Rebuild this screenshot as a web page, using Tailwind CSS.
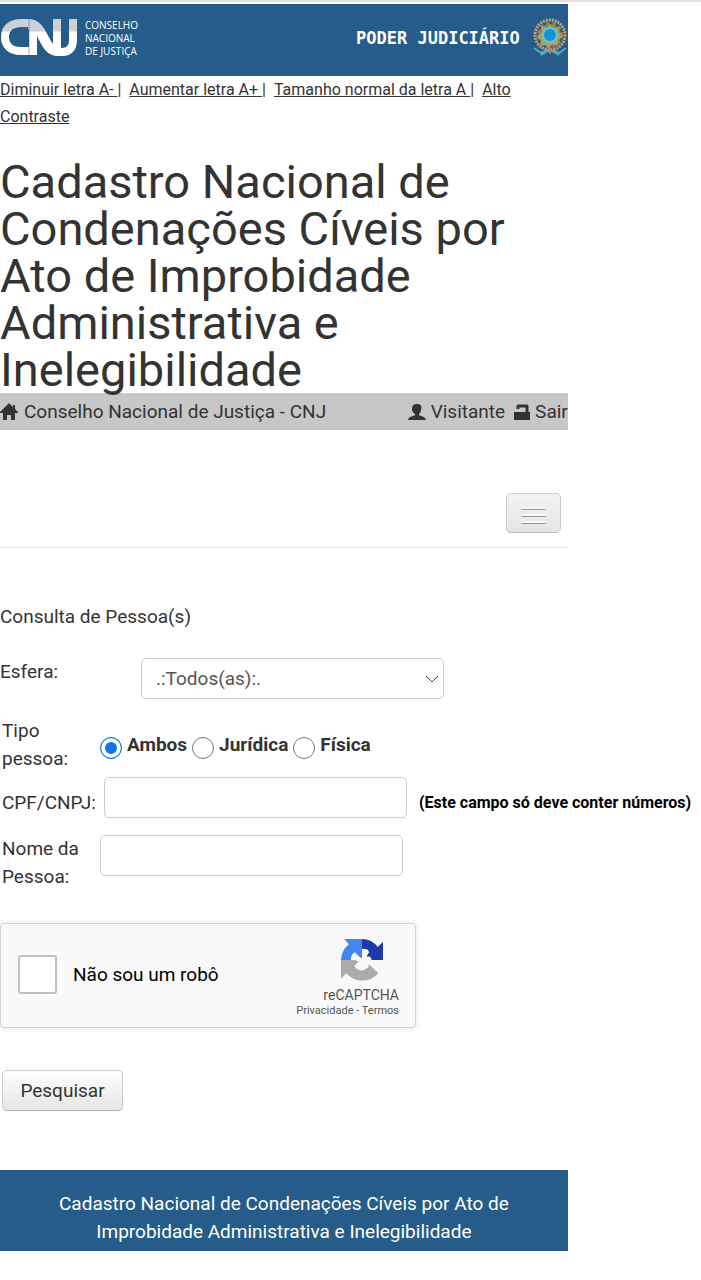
<!DOCTYPE html>
<html lang="pt-BR">

<head>
    <meta charset="UTF-8">
    <meta name="viewport" content="width=device-width, initial-scale=1.0">
    <script src="https://cdn.jsdelivr.net/npm/@tailwindcss/browser@4"></script>
    <title>Cadastro Nacional de Condenações Cíveis</title>
</head>

<body class="bg-white border-t-2 border-[#e0e0e0] pt-0.5 font-['Roboto',sans-serif] text-[19px] leading-7 text-[#333]">
    <div class="w-[81%]">
        <header class="flex items-center justify-between h-[72px] pb-1 bg-[#265c89] text-white">
            <div class="flex items-center gap-2">
                <svg class="w-[77px] h-10" viewBox="0 0 77 40" fill="none" stroke-width="8">
                    <defs>
                        <linearGradient id="cnj" gradientUnits="userSpaceOnUse" x1="0" y1="0" x2="0" y2="40">
                            <stop offset="0" stop-color="#ccd2da" />
                            <stop offset=".32" stop-color="#ccd2da" />
                            <stop offset=".36" stop-color="#fff" />
                            <stop offset="1" stop-color="#fff" />
                        </linearGradient>
                    </defs>
                    <path stroke="url(#cnj)" d="M30 5H22C10 5 5 11 5 19s5 14 16 14h12V10" />
                    <path stroke="url(#cnj)" stroke-width="10" d="M28 6c17 0 14 27 30 27" />
                    <path stroke="url(#cnj)" d="M57 37V1M56 34h6c8 0 11-5 11-12V1" />
                    <path stroke="#265c89" stroke-width="1" stroke-opacity=".5" d="M29 1v36" />
                </svg>
                <p class="font-['Open_Sans',sans-serif] font-medium text-[10px] leading-[13px]">CONSELHO<br>NACIONAL<br>DE JUSTIÇA</p>
            </div>
            <div class="flex items-center gap-3">
                <span class="font-['DejaVu_Sans_Mono',monospace] font-bold text-[17px]">PODER JUDICIÁRIO</span>
                <svg class="w-9 h-10" viewBox="0 0 36 40" fill="none">
                    <path d="M2 30l7 5 9-4 9 4 7-5M9 37l9-5 9 5" stroke="#4caac5" stroke-width="2" />
                    <circle cx="18" cy="17" r="15" stroke="#c5a070" stroke-width="3" stroke-dasharray="2 1" />
                    <circle cx="18" cy="17" r="11" fill="#6c9563" stroke="#b9774c" stroke-width="4" stroke-dasharray="3 3" />
                    <path d="M18 6l3 5 6-2-1 6 5 3-5 4v6l-6-2-3 5-3-4-6 1 1-6-4-4 5-4-1-6 6 2z" fill="#a5a568" />
                    <circle cx="18" cy="17" r="7" fill="#1691d3" stroke="#62c5e4" stroke-width="2" />
                    <path d="M18 28v8" stroke="#c8714c" stroke-width="2" />
                </svg>
            </div>
        </header>

        <nav class="text-[16px] leading-[27px]">
            <a href="#" class="underline">Diminuir letra A-&nbsp;</a>|
            <a href="#" class="ml-1 underline">Aumentar letra A+&nbsp;</a>|
            <a href="#" class="ml-1 underline">Tamanho normal da letra A&nbsp;</a>|
            <a href="#" class="ml-1 underline">Alto Contraste</a>
        </nav>

        <h1 class="pt-7 pr-12 text-[47px] leading-[47px]">Cadastro Nacional de Condenações Cíveis por Ato de Improbidade Administrativa e Inelegibilidade</h1>

        <div class="flex items-center justify-between h-[37px] bg-[#c7c7c7]">
            <a href="#" class="flex items-center gap-1">
                <svg class="w-5 h-5" viewBox="0 0 20 20" fill="#333"><path d="M9 1L0 10v1h3v7h4v-5h4v5h4v-7h3v-1l-3-3V3h-2v2z" /></svg>
                Conselho Nacional de Justiça - CNJ
            </a>
            <div class="flex items-center gap-2">
                <a href="#" class="flex items-center gap-1">
                    <svg class="w-5 h-5" viewBox="0 0 20 20" fill="#333"><path d="M10 2c4 0 5 2 4 6 0 2-1 3-2 4v1c3 2 6 1 7 5H1c1-4 4-3 7-5v-1C6 11 6 10 5 8 5 4 6 2 10 2z" /></svg>
                    Visitante
                </a>
                <a href="#" class="flex items-center gap-1">
                    <svg class="w-[18px] h-5" viewBox="0 0 18 20" fill="none"><path d="M1 10h16v8H1z" fill="#333" /><path d="M5 7V4h9v7" stroke="#333" stroke-width="3" stroke-linejoin="round" /></svg>
                    Sair
                </a>
            </div>
        </div>

        <div class="flex justify-end pt-[63px] pr-[7px] pb-3.5 border-b border-[#e5e5e5]">
            <button type="button" aria-label="Menu" class="flex flex-col items-center justify-center gap-1 w-[55px] h-10 pt-1 rounded-[5px] border border-[#ccc] border-b-[#b8b8b8] bg-linear-to-b from-[#f4f4f4] to-[#e5e5e5]">
                <span class="w-[25px] h-[3px] rounded-sm bg-[#f5f5f5] border-b border-[#999]"></span>
                <span class="w-[25px] h-[3px] rounded-sm bg-[#f5f5f5] border-b border-[#999]"></span>
                <span class="w-[25px] h-[3px] rounded-sm bg-[#f5f5f5] border-b border-[#999]"></span>
            </button>
        </div>
    </div>

    <form class="pt-[55px]">
        <h2>Consulta de Pessoa(s)</h2>

        <div class="flex items-start pt-[27px]">
            <label for="esfera" class="w-[141px]">Esfera:</label>
            <div class="relative">
                <select id="esfera" class="appearance-none w-[303px] h-[41px] px-3.5 rounded-[5px] border border-[#ccc] bg-white text-[#555]">
                    <option>.:Todos(as):.</option>
                </select>
                <svg class="absolute right-1 top-3 w-4 h-4 pointer-events-none" viewBox="0 0 16 16" fill="none" stroke="#444"><path d="M2 6l6 6 6-6" /></svg>
            </div>
        </div>

        <div role="radiogroup" aria-labelledby="tipo" class="flex items-start pt-[18px]">
            <span id="tipo" class="w-[100px] pl-0.5 pr-5">Tipo pessoa:</span>
            <div class="flex gap-[5px] pt-3.5 font-bold">
                <label class="flex gap-[5px]"><input type="radio" name="tipo" checked class="appearance-none mt-1.5 size-[22px] rounded-full border border-[#777] bg-white checked:border-[#0b74ee] checked:bg-[#0b74ee] checked:shadow-[inset_0_0_0_4px_white]">Ambos</label>
                <label class="flex gap-[5px]"><input type="radio" name="tipo" class="appearance-none mt-1.5 size-[22px] rounded-full border border-[#777] bg-white">Jurídica</label>
                <label class="flex gap-[5px]"><input type="radio" name="tipo" class="appearance-none mt-1.5 size-[22px] rounded-full border border-[#777] bg-white">Física</label>
            </div>
        </div>

        <div class="flex items-start pt-1 pl-0.5">
            <label for="cpf" class="w-[102px] shrink-0 pt-3">CPF/CNPJ:</label>
            <input id="cpf" type="text" class="w-[303px] h-[41px] shrink-0 px-3 rounded-[5px] border border-[#ccc] bg-white">
            <b class="pt-3 pl-3 text-[16px] text-black whitespace-nowrap">(Este campo só deve conter números)</b>
        </div>

        <div class="flex items-start pt-[17px] pl-0.5">
            <label for="nome" class="w-[98px] shrink-0">Nome da Pessoa:</label>
            <input id="nome" type="text" class="w-[303px] h-[41px] px-3 rounded-[5px] border border-[#ccc] bg-white">
        </div>

        <div class="flex items-center justify-between w-[416px] h-[105px] mt-8 pl-[17px] pr-4 rounded-[4px] border border-[#d3d3d3] bg-[#f9f9f9] shadow-[0_0_4px_1px_rgba(0,0,0,0.08)]">
            <label class="flex items-center gap-4 pb-0.5 text-black"><input type="checkbox" class="appearance-none size-[39px] rounded-[3px] border-2 border-[#c1c1c1] bg-white">Não sou um robô</label>
            <div class="flex flex-col items-end pt-1 text-[#555]">
                <svg class="w-[42px] h-[42px] mr-4 mb-1" viewBox="0 0 64 64">
                    <path d="M64 32V4l-8 8A32 32 0 0 0 32 0v15c5 0 8 2 11 5l-9 10v2z" fill="#1c3aa9" />
                    <path d="M32 0H5l7 8A32 32 0 0 0 0 32h15c0-6 2-10 6-12l9 9 2-1z" fill="#4285f4" />
                    <path d="M0 32v28l8-8a32 32 0 0 0 49 0L43 39c-3 6-7 9-11 9-5 0-9-2-11-6l9-10z" fill="#ababab" />
                    <path d="M32 32V19c0-5 11-5 10 1l-3 7c8-2 10 6 4 8l-5-1 4 8c-4 5-9 6-14 3l-8-3 7-8c-9 0-9-10-2-8l5 3z" fill="#f9f9f9" />
                </svg>
                <span class="text-[14px] leading-5">reCAPTCHA</span>
                <p class="text-[11px] leading-3"><a href="#">Privacidade</a> - <a href="#">Termos</a></p>
            </div>
        </div>

        <button type="submit" class="block mt-[42px] ml-0.5 h-[41px] w-[121px] rounded-[5px] border border-[#ccc] border-b-[#b3b3b3] bg-linear-to-b from-white to-[#e6e6e6] shadow-xs">Pesquisar</button>
    </form>

    <footer class="w-[81%] mt-[59px] px-12 pt-5 pb-[5px] bg-[#265c89] text-center text-white">Cadastro Nacional de Condenações Cíveis por Ato de Improbidade Administrativa e Inelegibilidade</footer>
</body>

</html>
